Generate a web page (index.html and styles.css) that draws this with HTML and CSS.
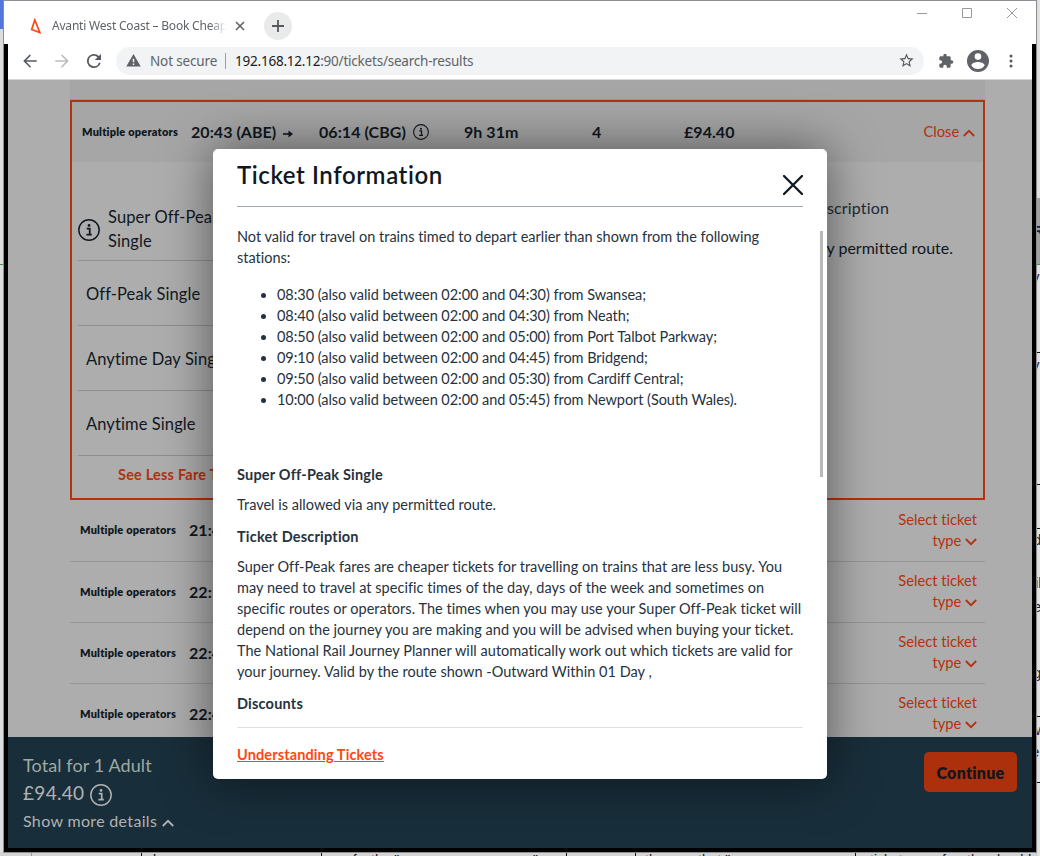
FILE: index.html
```html
<!DOCTYPE html>
<html lang="en">
<head>
<meta charset="utf-8">
<title>Avanti West Coast – Book Cheap Train Tickets</title>
<link rel="stylesheet" href="styles.css">
</head>
<body>
<svg class="defs" aria-hidden="true">
  <symbol id="info" viewBox="0 0 24 24"><circle cx="12" cy="12" r="11.1" fill="none" stroke="currentColor" stroke-width="1.6"/><circle cx="12" cy="7" r="1.5" fill="currentColor"/><path d="M9.5 10.400h3.300v6.200M9.200 17h5.800" fill="none" stroke="currentColor" stroke-width="1.900"/></symbol>
  <symbol id="up" viewBox="0 0 12 8"><path d="M.8 7L6 1.8 11.2 7" fill="none" stroke="currentColor" stroke-width="1.8"/></symbol>
  <symbol id="down" viewBox="0 0 12 8"><path d="M.8 1L6 6.2 11.2 1" fill="none" stroke="currentColor" stroke-width="1.8"/></symbol>
</svg>
<div class="desktop">
  <i class="bg bg-blue"></i><i class="bg bg-left"></i><i class="bg bg-green-l"></i>
  <i class="bg bg-right"></i><i class="bg bg-head"></i><i class="bg bg-green-r"></i>
  <i class="bg cell h1"></i><i class="bg cell h2"></i><i class="bg cell h3"></i><i class="bg cell h4"></i><i class="bg cell h5"></i>
  <b class="bg frag f1">R</b><span class="bg frag f2">y</span><span class="bg frag f3">y</span><span class="bg frag f4">d</span><span class="bg frag f5">il</span><span class="bg frag f6">e</span><span class="bg frag f7">g</span><span class="bg frag f8">w</span><span class="bg frag f9">e</span>
  <i class="bg col v1"></i><i class="bg col v2"></i><i class="bg col v3"></i><i class="bg col v4"></i><i class="bg col v5"></i><i class="bg col v6"></i>
  <span class="bg under u1">by</span><span class="bg under u2">of</span><span class="bg under u3">the "</span><span class="bg under u4">"</span><span class="bg under u5">th</span><span class="bg under u6">that "</span><span class="bg under u7">ticket</span><span class="bg under u8">f</span><span class="bg under u9">the</span><span class="bg under u10">should</span>
  <div class="window">
    <div class="titlebar">
      <svg class="fav" viewBox="0 0 12 16"><path d="M4.8 2L1.7 11.5 9.8 14.5z" fill="none" stroke="#ff4713" stroke-width="1.7"/></svg>
      <span class="tab-title">Avanti West Coast – Book Cheap</span>
      <svg class="tab-x" viewBox="0 0 10 10"><path d="M1 1l8 8M9 1L1 9" stroke="#5f6368" stroke-width="1.6"/></svg>
      <span class="newtab"><svg viewBox="0 0 12 12"><path d="M6 0v12M0 6h12" stroke="#55595e" stroke-width="1.8"/></svg></span>
      <div class="controls">
        <svg viewBox="0 0 12 12"><path d="M1 6.5h10" stroke="#999"/></svg>
        <svg viewBox="0 0 12 12"><path d="M1.5 1.5h9v9h-9z" fill="none" stroke="#999"/></svg>
        <svg viewBox="0 0 12 12"><path d="M1 1l10 10M11 1L1 11" stroke="#999"/></svg>
      </div>
    </div>
    <div class="frame">
      <div class="toolbar">
        <svg class="nav" viewBox="0 0 24 24"><path d="M21 11H7l6-6L12 3l-9 9 9 9 1.400-1.400L7 13H21z" fill="#55595e"/></svg>
        <svg class="nav" viewBox="0 0 24 24"><path d="M3 11h14l-6-6L12 3l9 9-9 9-1.400-1.400L17 13H3z" fill="#babcbe"/></svg>
        <svg class="nav" viewBox="0 0 24 24"><path d="M18.500 5.400A9.300 9.300 0 1 0 21 14.200h-2.500A6.900 6.900 0 1 1 12 5.100c1.900 0 3.500.8 4.700 2L13 10.800h8.300V2.600z" fill="#55595e"/></svg>
        <div class="address">
          <svg class="warn" viewBox="0 0 16 14"><path d="M8 0l7.8 13.5H.2z" fill="#5f6368"/><path d="M8 5v4M8 10.3v1.600" stroke="#f1f3f4" stroke-width="1.600"/></svg>
          <span class="insecure">Not secure</span><span class="url">192.168.12.12<em>:90/tickets/search-results</em></span>
          <svg class="star" viewBox="0 0 24 24"><path d="M22 9.2l-7.2-.6L12 2 9.2 8.6 2 9.2l5.5 4.8L5.800 21 12 17.300l6.200 3.700-1.600-7zM12 15.400l-3.800 2.300 1-4.300-3.300-2.900 4.400-.4L12 6.100l1.700 4 4.400.4-3.300 2.900 1 4.300z" fill="#55595e"/></svg>
        </div>
        <svg class="puzzle" viewBox="0 0 24 24"><path d="M20.500 11H19V7c0-1.100-.9-2-2-2h-4V3.500a2.500 2.500 0 0 0-5 0V5H4c-1.100 0-2 .9-2 2v3.800h1.500a2.700 2.700 0 0 1 0 5.400H2V20c0 1.100.9 2 2 2h3.800v-1.500a2.700 2.700 0 0 1 5.400 0V22H17c1.100 0 2-.9 2-2v-4h1.500a2.500 2.500 0 0 0 0-5z" fill="#5f6368"/></svg>
        <svg class="user" viewBox="2 2 20 20"><path d="M12 2a10 10 0 1 0 0 20 10 10 0 0 0 0-20zm0 3a3 3 0 1 1 0 6 3 3 0 0 1 0-6zm0 14.200a7.200 7.200 0 0 1-6-3.220c.03-1.990 4-3.080 6-3.080s5.970 1.090 6 3.080a7.200 7.200 0 0 1-6 3.220z" fill="#5f6368"/></svg>
        <svg class="dots" viewBox="0 0 4 14"><g fill="#55595e"><circle cx="2" cy="2" r="1.500"/><circle cx="2" cy="7" r="1.500"/><circle cx="2" cy="12" r="1.500"/></g></svg>
      </div>
      <div class="page">
        <div class="results">
          <div class="strip"></div>
          <section class="card">
            <div class="card-head">
              <span class="ops">Multiple operators</span>
              <span class="time">20:43 (ABE) <svg class="arrow" viewBox="0 0 10 8"><path d="M0 4h8" stroke="#10181f" stroke-width="1.600"/><path d="M5.500 .6L10 4 5.500 7.400z" fill="#10181f"/></svg></span>
              <span class="time">06:14 (CBG) <svg class="info-s"><use href="#info"/></svg></span>
              <span class="time">9h 31m</span><span class="time">4</span><span class="time">£94.40</span>
              <span class="action">Close <svg class="chev"><use href="#up"/></svg></span>
            </div>
            <div class="card-body">
              <div class="fares">
                <div class="fare first"><svg class="info-m"><use href="#info"/></svg><span>Super Off-Peak<br>Single</span></div>
                <div class="fare">Off-Peak Single</div>
                <div class="fare">Anytime Day Single</div>
                <div class="fare">Anytime Single</div>
                <div class="less">See Less Fare Types</div>
              </div>
              <div class="desc"><p class="d1">Ticket Description</p><p class="d2">Travel is allowed via any permitted route.</p></div>
            </div>
          </section>
          <div class="row"><span class="ops">Multiple operators</span><span class="time">21:43</span><span class="action">Select ticket<br>type <svg class="chev"><use href="#down"/></svg></span></div>
          <div class="row"><span class="ops">Multiple operators</span><span class="time">22:13</span><span class="action">Select ticket<br>type <svg class="chev"><use href="#down"/></svg></span></div>
          <div class="row"><span class="ops">Multiple operators</span><span class="time">22:43</span><span class="action">Select ticket<br>type <svg class="chev"><use href="#down"/></svg></span></div>
          <div class="row"><span class="ops">Multiple operators</span><span class="time">22:43</span><span class="action">Select ticket<br>type <svg class="chev"><use href="#down"/></svg></span></div>
        </div>
        <footer class="basket">
          <div>
            <p class="total">Total for 1 Adult</p>
            <p class="price">£94.40 <svg class="info-m"><use href="#info"/></svg></p>
            <p class="more">Show more details <svg class="chev"><use href="#up"/></svg></p>
          </div>
          <button class="continue">Continue</button>
        </footer>
        <div class="modal">
          <header class="modal-head"><h1>Ticket Information</h1><svg class="close" viewBox="0 0 20 20"><path d="M1 1l18 18M19 1L1 19" stroke="#10181f" stroke-width="2.300" stroke-linecap="round"/></svg></header>
          <div class="modal-body">
            <p class="intro">Not valid for travel on trains timed to depart earlier than shown from the following<br>stations:</p>
            <ul>
              <li>08:30 (also valid between 02:00 and 04:30) from Swansea;</li>
              <li>08:40 (also valid between 02:00 and 04:30) from Neath;</li>
              <li>08:50 (also valid between 02:00 and 05:00) from Port Talbot Parkway;</li>
              <li>09:10 (also valid between 02:00 and 04:45) from Bridgend;</li>
              <li>09:50 (also valid between 02:00 and 05:30) from Cardiff Central;</li>
              <li>10:00 (also valid between 02:00 and 05:45) from Newport (South Wales).</li>
            </ul>
            <h2 class="first-h">Super Off-Peak Single</h2>
            <p>Travel is allowed via any permitted route.</p>
            <h2>Ticket Description</h2>
            <p class="long">Super Off-Peak fares are cheaper tickets for travelling on trains that are less busy. You<br>may need to travel at specific times of the day, days of the week and sometimes on<br>specific routes or operators. The times when you may use your Super Off-Peak ticket will<br>depend on the journey you are making and you will be advised when buying your ticket.<br>The National Rail Journey Planner will automatically work out which tickets are valid for<br>your journey. Valid by the route shown -Outward Within 01 Day ,</p>
            <h2>Discounts</h2>
          </div>
          <div class="modal-foot"><a>Understanding Tickets</a></div>
          <i class="thumb"></i>
        </div>
      </div>
    </div>
  </div>
</div>
</body>
</html>
```
FILE: styles.css
```css
* { box-sizing: border-box; }
body { margin: 0; font-family: Lato, "Open Sans", sans-serif; color: #10181f; font-variant-ligatures: none; }
p, h1, h2, ul { margin: 0; }
.defs { position: absolute; width: 0; height: 0; }

/* Desktop behind the browser window */
.desktop { position: relative; width: 1040px; height: 856px; overflow: hidden; background: #d4d4d4; }
.bg { position: absolute; }
.bg-blue { left: 0; top: 0; width: 107px; height: 29px; background: #5574dc; }
.bg-left { left: 0; top: 29px; width: 4px; height: 823px; background: #dcdddf; }
.bg-green-l { left: 0; top: 264px; width: 4px; height: 1px; background: #3c9a3c; }
.bg-right { left: 1036px; top: 0; width: 4px; height: 856px; background: linear-gradient(90deg, #c4c4c4, #e2e2e2 50%); }
.bg-head { left: 1036px; top: 198px; width: 4px; height: 66px; background: #a0a0a0; }
.bg-green-r { left: 1036px; top: 264px; width: 4px; height: 1px; background: #3c9a3c; }
.cell { left: 1036px; width: 4px; height: 1px; background: #111; }
.h1 { top: 352px; } .h2 { top: 484px; } .h3 { top: 528px; } .h4 { top: 716px; } .h5 { top: 782px; }
.frag { left: 1033px; font: 15px/16px "Liberation Sans", sans-serif; color: #17233a; }
.f1 { top: 223px; font-weight: bold; } .f2 { top: 269px; left: 1032px; } .f3 { top: 357px; left: 1032px; } .f4 { top: 532px; } .f5 { top: 575px; left: 1035px; } .f6 { top: 599px; } .f7 { top: 665px; } .f8 { top: 722px; left: 1035px; } .f9 { top: 744px; left: 1031px; }
.col { top: 852px; width: 1px; height: 4px; background: #111; }
.v1 { left: 31px; background: #999; } .v2 { left: 141px; } .v3 { left: 321px; } .v4 { left: 566px; } .v5 { left: 635px; } .v6 { left: 855px; }
.under { top: 852px; font: 14px/16px "Liberation Sans", sans-serif; color: #111; }
.u1 { left: 153px; } .u2 { left: 345px; } .u3 { left: 371px; } .u4 { left: 533px; } .u5 { left: 645px; } .u6 { left: 698px; } .u7 { left: 870px; } .u8 { left: 942px; } .u9 { left: 967px; } .u10 { left: 990px; }

/* Browser window */
.window { position: absolute; left: 4px; top: 1px; width: 1032px; height: 851px; box-shadow: 0 0 0 1px #8e8f94; background: #fff; }
.titlebar { height: 43px; display: flex; align-items: center; padding: 7px 14px 0 26px; font-family: "Noto Sans", sans-serif; }
.fav { width: 12px; height: 16px; }
.tab-title { margin: -1px 0 0 10px; width: 174px; font-size: 12px; letter-spacing: -.2px; color: #5f6368; white-space: nowrap; overflow: hidden; -webkit-mask-image: linear-gradient(90deg, #000 91%, transparent); mask-image: linear-gradient(90deg, #000 91%, transparent); }
.tab-x { width: 10px; height: 10px; margin-left: 9px; }
.newtab { margin-left: 19px; width: 28px; height: 28px; border-radius: 50%; background: #e9eaea; display: grid; place-items: center; }
.newtab svg { width: 12px; height: 12px; }
.controls { margin: -26px 0 0 auto; padding-right: 4px; display: flex; gap: 33px; }
.controls svg { width: 12px; height: 12px; }
.frame { height: 808px; background: #000; padding: 0 4px 4px; }
.toolbar { height: 36px; background: #fff; border-bottom: 1px solid #d8d8d8; display: flex; align-items: center; padding: 0 0 2px 13px; font-family: "Noto Sans", sans-serif; }
.nav { width: 18px; height: 18px; margin-right: 14px; flex: none; }
.address { width: 808px; height: 28px; margin-left: -1px; border-radius: 14px; background: #f1f3f4; display: flex; align-items: center; padding-left: 10px; font-size: 13.5px; color: #5f6368; }
.warn { width: 15px; height: 13px; }
.insecure { margin-left: 9px; border-right: 1px solid #9aa0a6; line-height: 16px; width: 76px; letter-spacing: -.15px; white-space: nowrap; }
.url { margin-left: 9px; color: #202124; letter-spacing: -.22px; }
.url em { font-style: normal; color: #5f6368; }
.star { width: 17px; height: 17px; margin: 0 9px 0 auto; }
.puzzle { width: 16px; height: 16px; margin-left: 14px; }
.user { width: 22px; height: 22px; margin-left: 13px; }
.dots { width: 4px; height: 14px; margin-left: 20px; }

/* Search results page */
.page { position: relative; height: 768px; background: #adadad; overflow: hidden; display: flex; flex-direction: column; }
.results { height: 657px; width: 915px; margin-left: 62px; overflow: hidden; }
.strip { height: 20px; background: #a6a6a6; border-bottom: 1px solid #999; }
.card { height: 400px; border: 2px solid #b3320f; }
.card-head { height: 60px; background: #a6a6a6; padding: 0 8px 1px 10px; display: grid; grid-template-columns: 109px 128px 145px 128px 92px 1fr auto; align-items: center; white-space: nowrap; }
.ops { font-size: 11px; font-weight: 800; letter-spacing: .2px; }
.time { font-size: 16px; font-weight: 700; letter-spacing: .05px; }
.arrow { width: 10px; height: 8px; margin-left: 3px; }
.info-s { width: 16px; height: 16px; vertical-align: -2px; margin-left: 3px; }
.action { font-size: 14.7px; line-height: 21px; color: #b3320f; text-align: right; }
.chev { width: 12px; height: 8px; }
.card-body { display: flex; justify-content: space-between; }
.fares { width: 300px; padding: 34px 0 0 6px; font-size: 16.500px; line-height: 24px; letter-spacing: .1px; }
.fare { height: 65px; border-bottom: 1px solid #8e8e8e; padding: 1px 0 0 8px; display: flex; align-items: center; }
.first { padding-left: 0; gap: 8px; }
.first .info-m { margin-top: 3px; }
.info-m { width: 22px; height: 22px; }
.less { padding: 7px 0 0 40px; font-size: 14.500px; line-height: 23px; font-weight: 700; color: #b3320f; letter-spacing: .2px; }
.desc { font-size: 16px; line-height: 24px; text-align: right; padding: 34px 30px 0 0; }
.d1 { padding-right: 64px; letter-spacing: .15px; color: #1c2b38; }
.d2 { margin-top: 16px; }
.row { height: 61px; border-bottom: 1px solid #969696; padding: 0 8px 2px 10px; display: grid; grid-template-columns: 109px 1fr auto; align-items: center; }
.card + .row { height: 62px; }

.basket { height: 111px; background: #182e3a; color: #b2b2b2; padding: 15px 15px 0; display: flex; justify-content: space-between; align-items: flex-start; }
.total { font-size: 18px; line-height: 26px; color: #9fa9a1; letter-spacing: .1px; }
.price { font-size: 19px; line-height: 30px; letter-spacing: .3px; }
.price .info-m { vertical-align: -6px; }
.more { font-size: 16px; line-height: 25px; letter-spacing: .33px; }
.continue { width: 93px; height: 40px; border: 0; border-radius: 5px; background: #ad300c; color: #10181f; font: 800 16px Lato, sans-serif; letter-spacing: .25px; padding: 0; }

/* Ticket information dialog */
.modal { position: absolute; left: 205px; top: 69px; width: 614px; height: 630px; padding: 0 24px; background: #fff; border-radius: 5px; box-shadow: 0 0 50px rgba(0,0,0,.52); font-size: 14.500px; line-height: 21px; color: #26323d; white-space: nowrap; }
.modal-head { height: 58px; border-bottom: 1px solid #9ca8b3; display: flex; justify-content: space-between; }
h1 { font-size: 24px; line-height: 30px; font-weight: 600; letter-spacing: .58px; padding-top: 11px; color: #10181f; }
.close { width: 20px; height: 20px; margin-top: 26px; }
.modal-body { padding-top: 19px; height: 521px; border-bottom: 1px solid #dfe2e4; }
ul { margin-top: 16px; padding-left: 40px; letter-spacing: -.05px; }
.long { letter-spacing: .03px; }
h2 { font-size: 14.500px; line-height: 21px; font-weight: 700; letter-spacing: .2px; margin: 11px 0 9px; }
.first-h { margin-top: 54px; }
.modal-foot { padding-top: 16px; }
.modal-foot a { color: #ff4713; font-weight: 700; text-decoration: underline; font-size: 14.500px; letter-spacing: .12px; }
.thumb { position: absolute; right: 4px; top: 82px; width: 3px; height: 246px; background: #b9b9b9; }
```
